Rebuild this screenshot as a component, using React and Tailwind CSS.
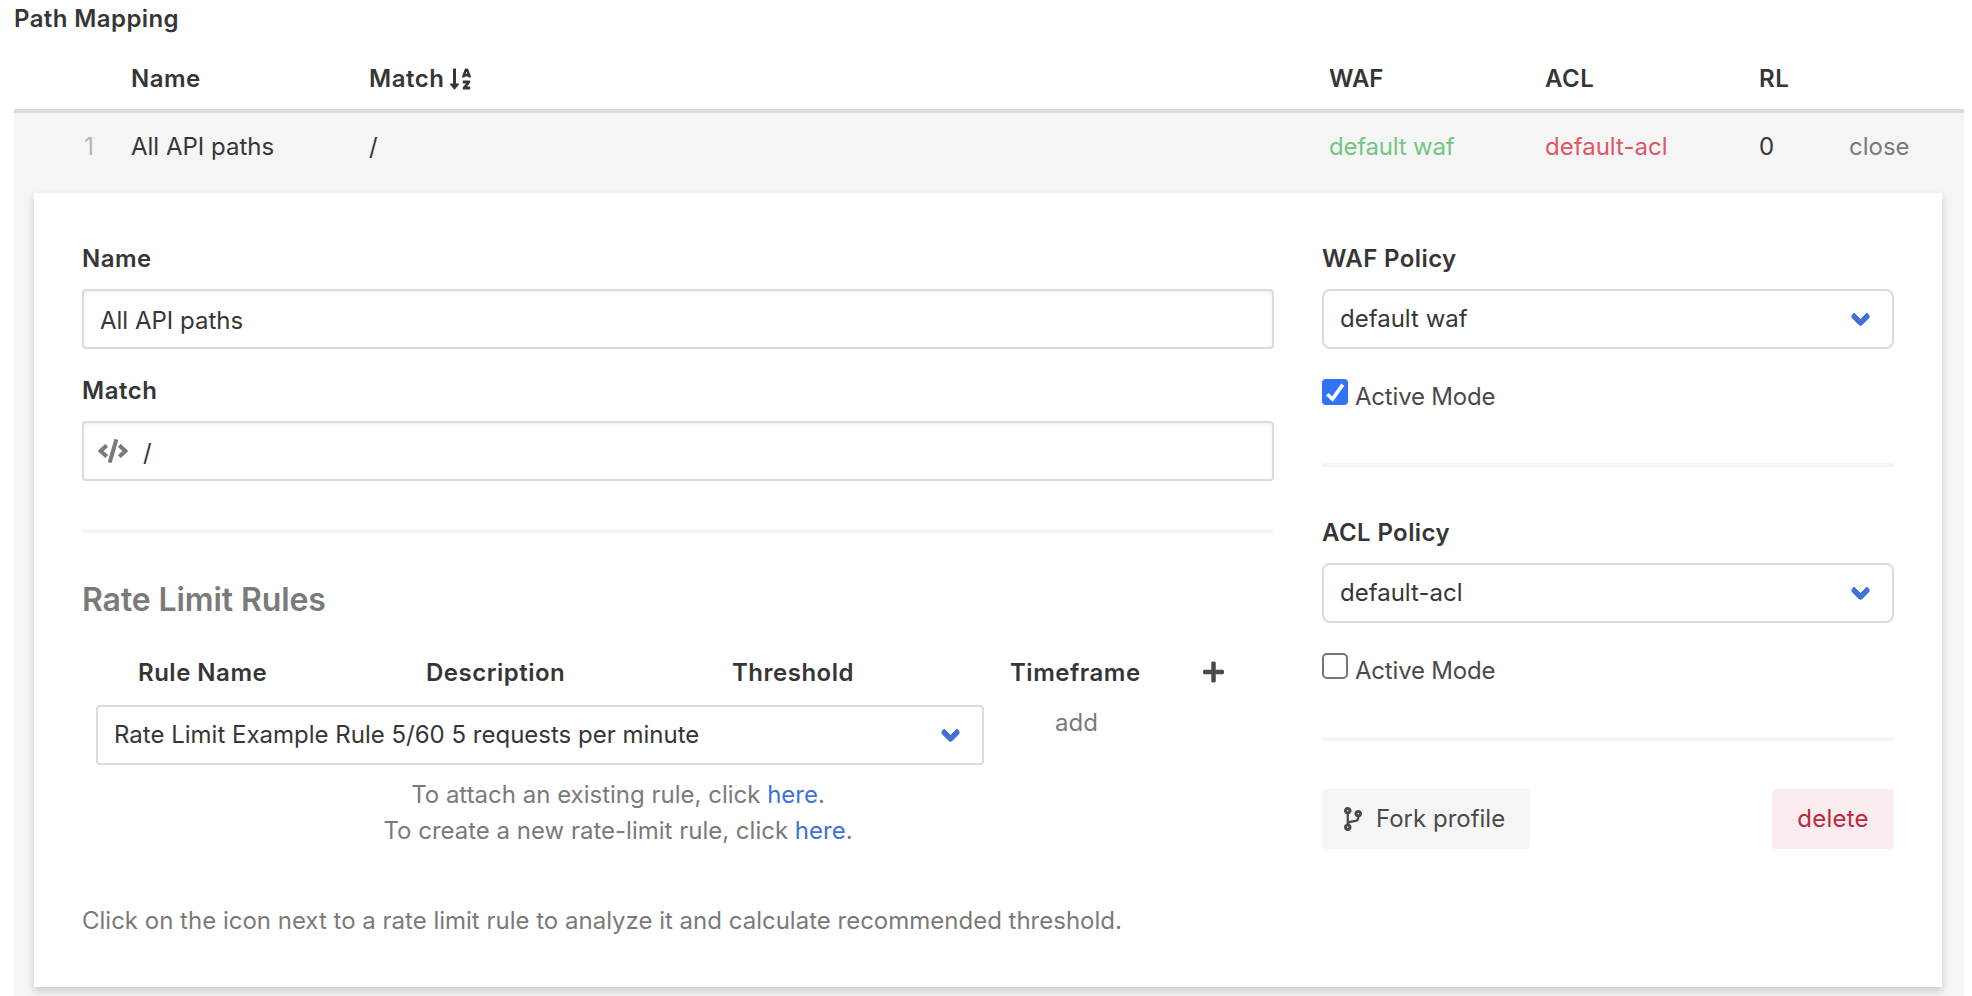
import React from 'react';
import { FaCode, FaCodeBranch, FaPlus, FaSortAlphaDown } from 'react-icons/fa';

const columns = 'grid grid-cols-[117px_238px_960px_216px_214px_90px_auto] h-9';

function Select({ value, rounded, className = '' }) {
  return (
    <div className={`relative h-[60px] ${className}`}>
      <select
        className={`h-full w-full appearance-none border-2 border-[#dbdbdb] bg-white pb-px pl-4 text-[#363636] ${rounded}`}
        defaultValue={value}
      >
        <option>{value}</option>
      </select>
      <span className="pointer-events-none absolute right-[26px] top-[20px] h-[15px] w-[15px] -rotate-45 rounded-[4px] border-[6px] border-t-0 border-r-0 border-[#4271d6]" />
    </div>
  );
}

function Checkbox({ checked }) {
  return checked ? (
    <span className="block h-[26px] w-[26px] rounded-[4px] bg-[#3273f6]">
      <svg viewBox="0 0 26 26" className="h-[26px] w-[26px]">
        <path d="M5.3 15.2 10.5 20 20.8 5.6" fill="none" stroke="#fff" strokeWidth="3.6" />
      </svg>
    </span>
  ) : (
    <span className="block h-[26px] w-[26px] rounded-[5px] border-2 border-[#767676] bg-white" />
  );
}

function Policy({ title, value, checked }) {
  return (
    <section>
      <label className="block font-semibold tracking-[0.4px] text-[#363636]">{title}</label>
      <Select value={value} rounded="rounded-lg" className="mt-3" />
      <div className="mt-[30px] flex h-9 items-start gap-[7px] text-[#4a4a4a]">
        <Checkbox checked={checked} />
        <span className="tracking-[-0.2px]">Active Mode</span>
      </div>
      <div className="mt-12 h-1 bg-[#f5f5f5]" />
    </section>
  );
}

export default function App() {
  return (
    <div className="flex h-screen flex-col overflow-hidden bg-white pl-3.5 pr-2 pt-px font-['Inter',sans-serif] text-2xl leading-9 text-[#363636]">
      <h1 className="font-semibold tracking-[0.4px]">Path Mapping</h1>

      <div className={`${columns} mt-6 font-semibold tracking-[0.5px]`}>
        <span />
        <span>Name</span>
        <span className="flex items-center gap-1.5">
          Match
          <FaSortAlphaDown className="h-6 w-[21px]" />
        </span>
        <span className="tracking-normal">WAF</span>
        <span>ACL</span>
        <span>RL</span>
      </div>
      <div className="mt-3 h-1 shrink-0 bg-[#dbdbdb]" />

      <div className="flex-1 bg-[#f5f5f5] px-5 pr-[22px] pt-4">
        <div className={`${columns} -mx-5`}>
          <span className="pr-[37px] text-right text-[#b5b5b5]">1</span>
          <span>All API paths</span>
          <span>/</span>
          <span className="tracking-[-0.2px] text-[#72c780]">default waf</span>
          <span className="text-[#df5469]">default-acl</span>
          <span>0</span>
          <span className="text-[#7a7a7a]">close</span>
        </div>

        <div className="mt-7 flex h-[794px] gap-12 bg-white p-12 shadow-[0_4px_8px_rgba(10,10,10,0.18)]">
          <div className="w-[1192px] shrink-0">
            <label className="block font-semibold tracking-[0.5px]">Name</label>
            <input
              className="mt-3 block h-[60px] w-full rounded-[4px] border-2 border-[#dbdbdb] bg-white pl-4 pt-0.5 shadow-[inset_0_2px_4px_rgba(10,10,10,0.05)]"
              defaultValue="All API paths"
            />
            <label className="mt-6 block font-semibold tracking-[0.5px]">Match</label>
            <div className="mt-3 flex h-[60px] items-center gap-[15px] rounded-[4px] border-2 border-[#dbdbdb] pl-3.5 shadow-[inset_0_2px_4px_rgba(10,10,10,0.05)]">
              <FaCode className="h-6 w-[30px] text-[#7a7a7a]" />
              <input className="min-w-0 flex-1 bg-transparent pt-1" defaultValue="/" />
            </div>
            <div className="mt-12 h-1 bg-[#f5f5f5]" />

            <h2 className="mt-[49px] text-[32px] font-semibold leading-9 tracking-[-0.1px] text-[#7a7a7a]">Rate Limit Rules</h2>

            <div className="mt-[37px] grid grid-cols-[288px_306px_278px_193px_auto] pl-14 font-semibold tracking-[0.5px]">
              <span>Rule Name</span>
              <span>Description</span>
              <span>Threshold</span>
              <span>Timeframe</span>
              <span className="flex h-9 items-center pb-0.5">
                <FaPlus className="h-6 w-[21px] text-[#4a4a4a]" />
              </span>
            </div>
            <div className="mt-3.5 flex items-start pl-3.5">
              <Select
                value="Rate Limit Example Rule 5/60 5 requests per minute"
                rounded="rounded-[4px]"
                className="w-[888px]"
              />
              <span className="ml-[71px] text-[#7a7a7a]">add</span>
            </div>
            <div className="mt-3 w-[1072px] text-center text-[#7a7a7a]">
              <p>
                To attach an existing rule, click <a className="text-[#4271d6]">here</a>.
              </p>
              <p>
                To create a new rate-limit rule, click <a className="text-[#4271d6]">here</a>.
              </p>
            </div>
            <p className="mt-[54px] text-[#7a7a7a]">
              Click on the icon next to a rate limit rule to analyze it and calculate recommended threshold.
            </p>
          </div>

          <div className="flex flex-1 flex-col gap-12">
            <div className="flex flex-col gap-12">
              <Policy title="WAF Policy" value="default waf" checked />
              <Policy title="ACL Policy" value="default-acl" />
            </div>
            <div className="flex justify-between">
              <button className="flex h-[60px] w-52 items-center gap-3.5 rounded-[4px] bg-[#f5f5f5] pl-[22px] pb-px text-[#4a4a4a]">
                <FaCodeBranch className="h-6 w-[18px]" />
                Fork profile
              </button>
              <button className="h-[60px] w-[122px] rounded-[4px] bg-[#fbecef] pb-px tracking-[0.2px] text-[#ba2a3c]">delete</button>
            </div>
          </div>
        </div>
      </div>
    </div>
  );
}
